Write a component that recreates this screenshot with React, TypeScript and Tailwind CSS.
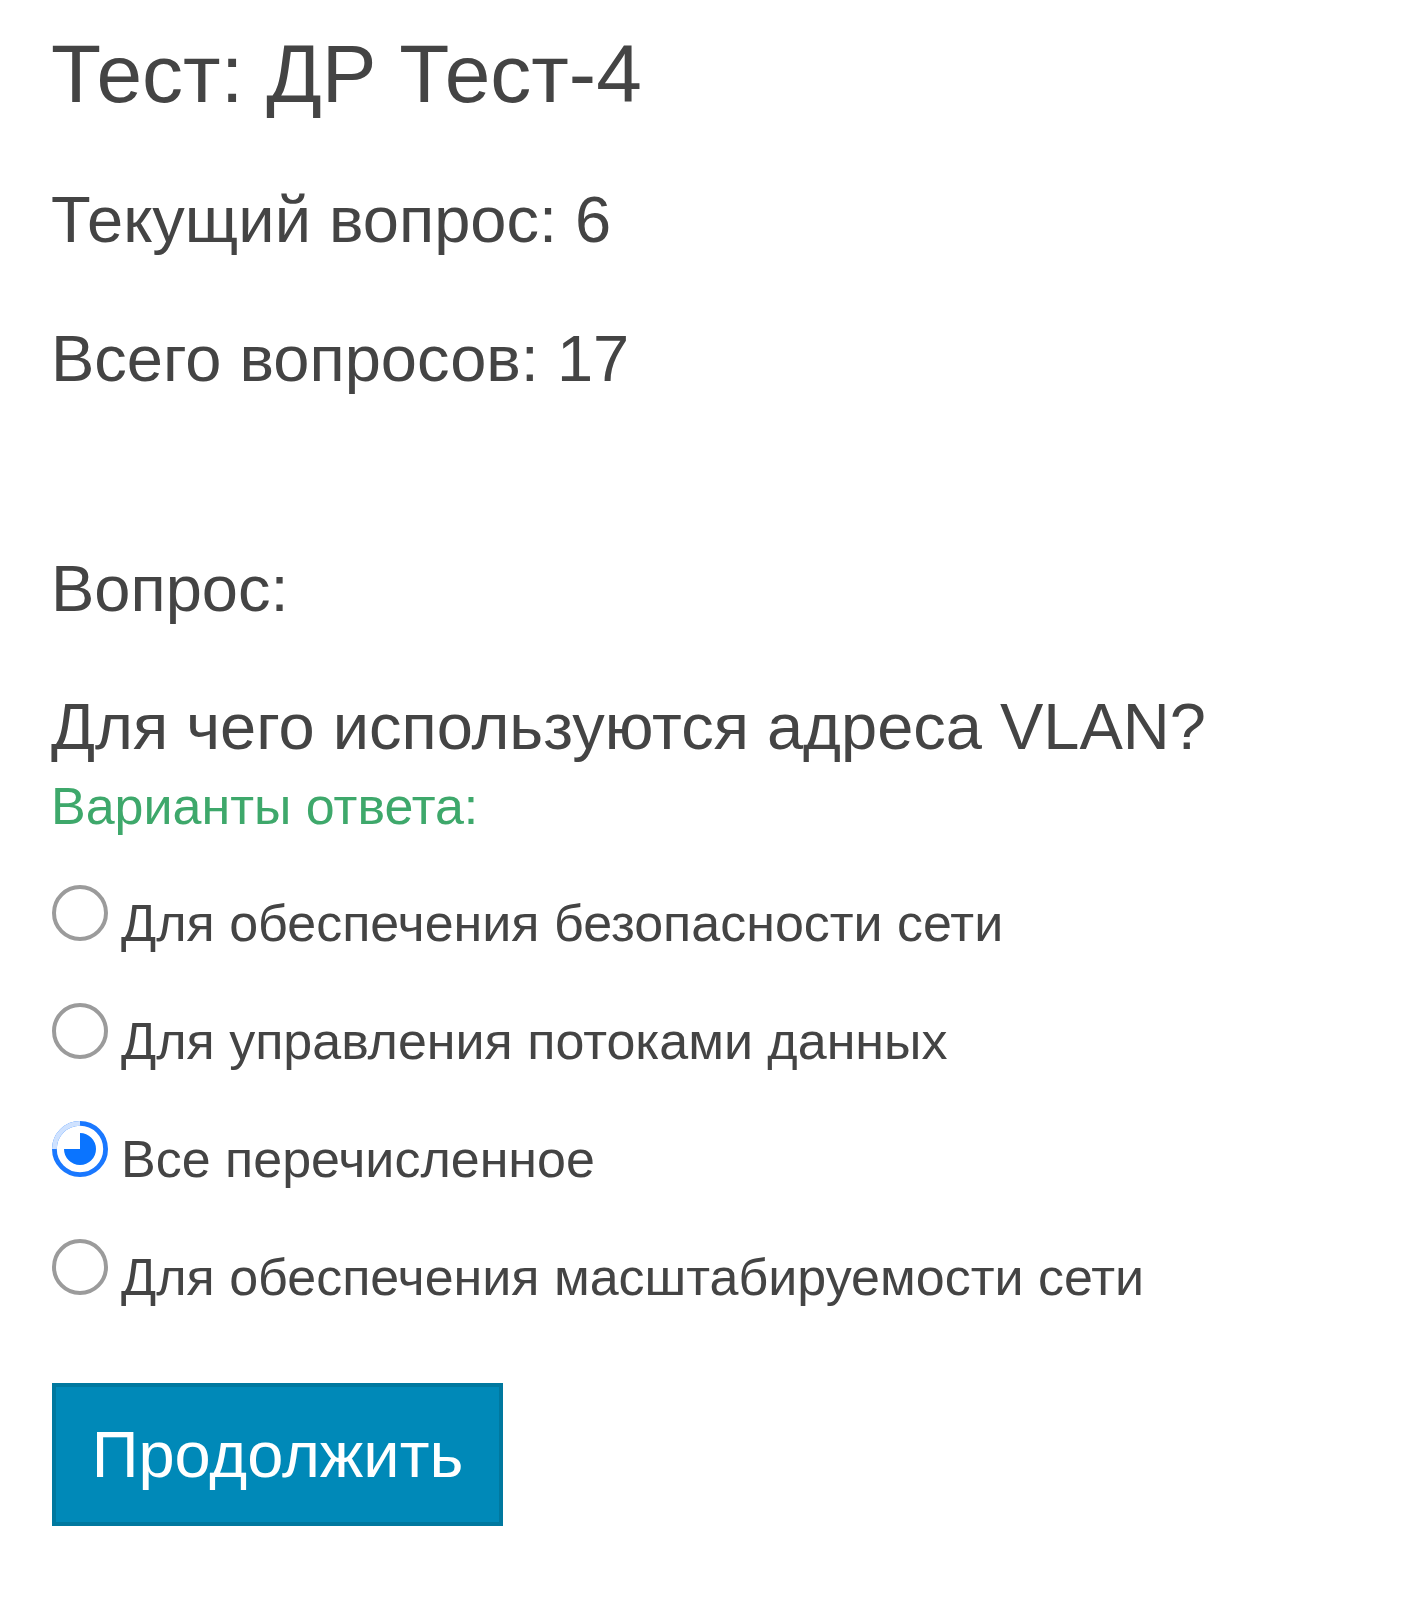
import { useState } from 'react';

const options = [
  'Для обеспечения безопасности сети',
  'Для управления потоками данных',
  'Все перечисленное',
  'Для обеспечения масштабируемости сети',
];

function Radio({ checked }: { checked: boolean }) {
  if (!checked) {
    return <span className="block w-[56px] h-[56px] shrink-0 rounded-full border-[4px] border-[#9b9b9b] bg-white" />;
  }
  return (
    <svg className="block w-[56px] h-[56px] shrink-0" viewBox="0 0 14 14">
      <circle cx="7" cy="7" r="6.4" fill="white" stroke="#1a78ff" strokeWidth="1.2" />
      <path d="M7 0.6 A6.4 6.4 0 0 0 0.6 7" fill="none" stroke="#cfe2ff" strokeWidth="1.2" />
      <path d="M7 7 L7 3 A4 4 0 1 1 3 7 Z" fill="#0a74ff" />
    </svg>
  );
}

export default function App() {
  const [selected, setSelected] = useState(2);

  return (
    <div className="min-h-[1600px] bg-white text-[#444444] font-['Liberation_Sans',Arial,sans-serif]">
      <div className="pl-[51px] pt-[24px]">
        <h1 className="text-[82px] leading-[100px] font-normal">Тест: ДР Тест-4</h1>
        <p className="mt-[56px] text-[65px] leading-[80px]">Текущий вопрос: 6</p>
        <p className="mt-[59px] text-[65px] leading-[80px]">Всего вопросов: 17</p>

        <p className="mt-[150px] text-[65px] leading-[80px]">Вопрос:</p>
        <p className="mt-[58px] text-[65px] leading-[80px]">Для чего используются адреса VLAN?</p>
        <p className="mt-[7px] text-[52px] leading-[64px] text-[#3ea86b]">Варианты ответа:</p>
      </div>

      <div className="pl-[52px] mt-[47px] flex flex-col gap-[48px]">
        {options.map((opt, i) => (
          <label key={opt} className="flex items-baseline gap-[13px] cursor-pointer" onClick={() => setSelected(i)}>
            <Radio checked={selected === i} />
            <span className="text-[52px] leading-[64px]">{opt}</span>
          </label>
        ))}
      </div>

      <div className="pl-[52px] mt-[74px]">
        <button className="flex items-center justify-center w-[451px] h-[143px] bg-[#0089b8] border-[4px] border-[#00789f] text-white text-[65px]">
          Продолжить
        </button>
      </div>
    </div>
  );
}
